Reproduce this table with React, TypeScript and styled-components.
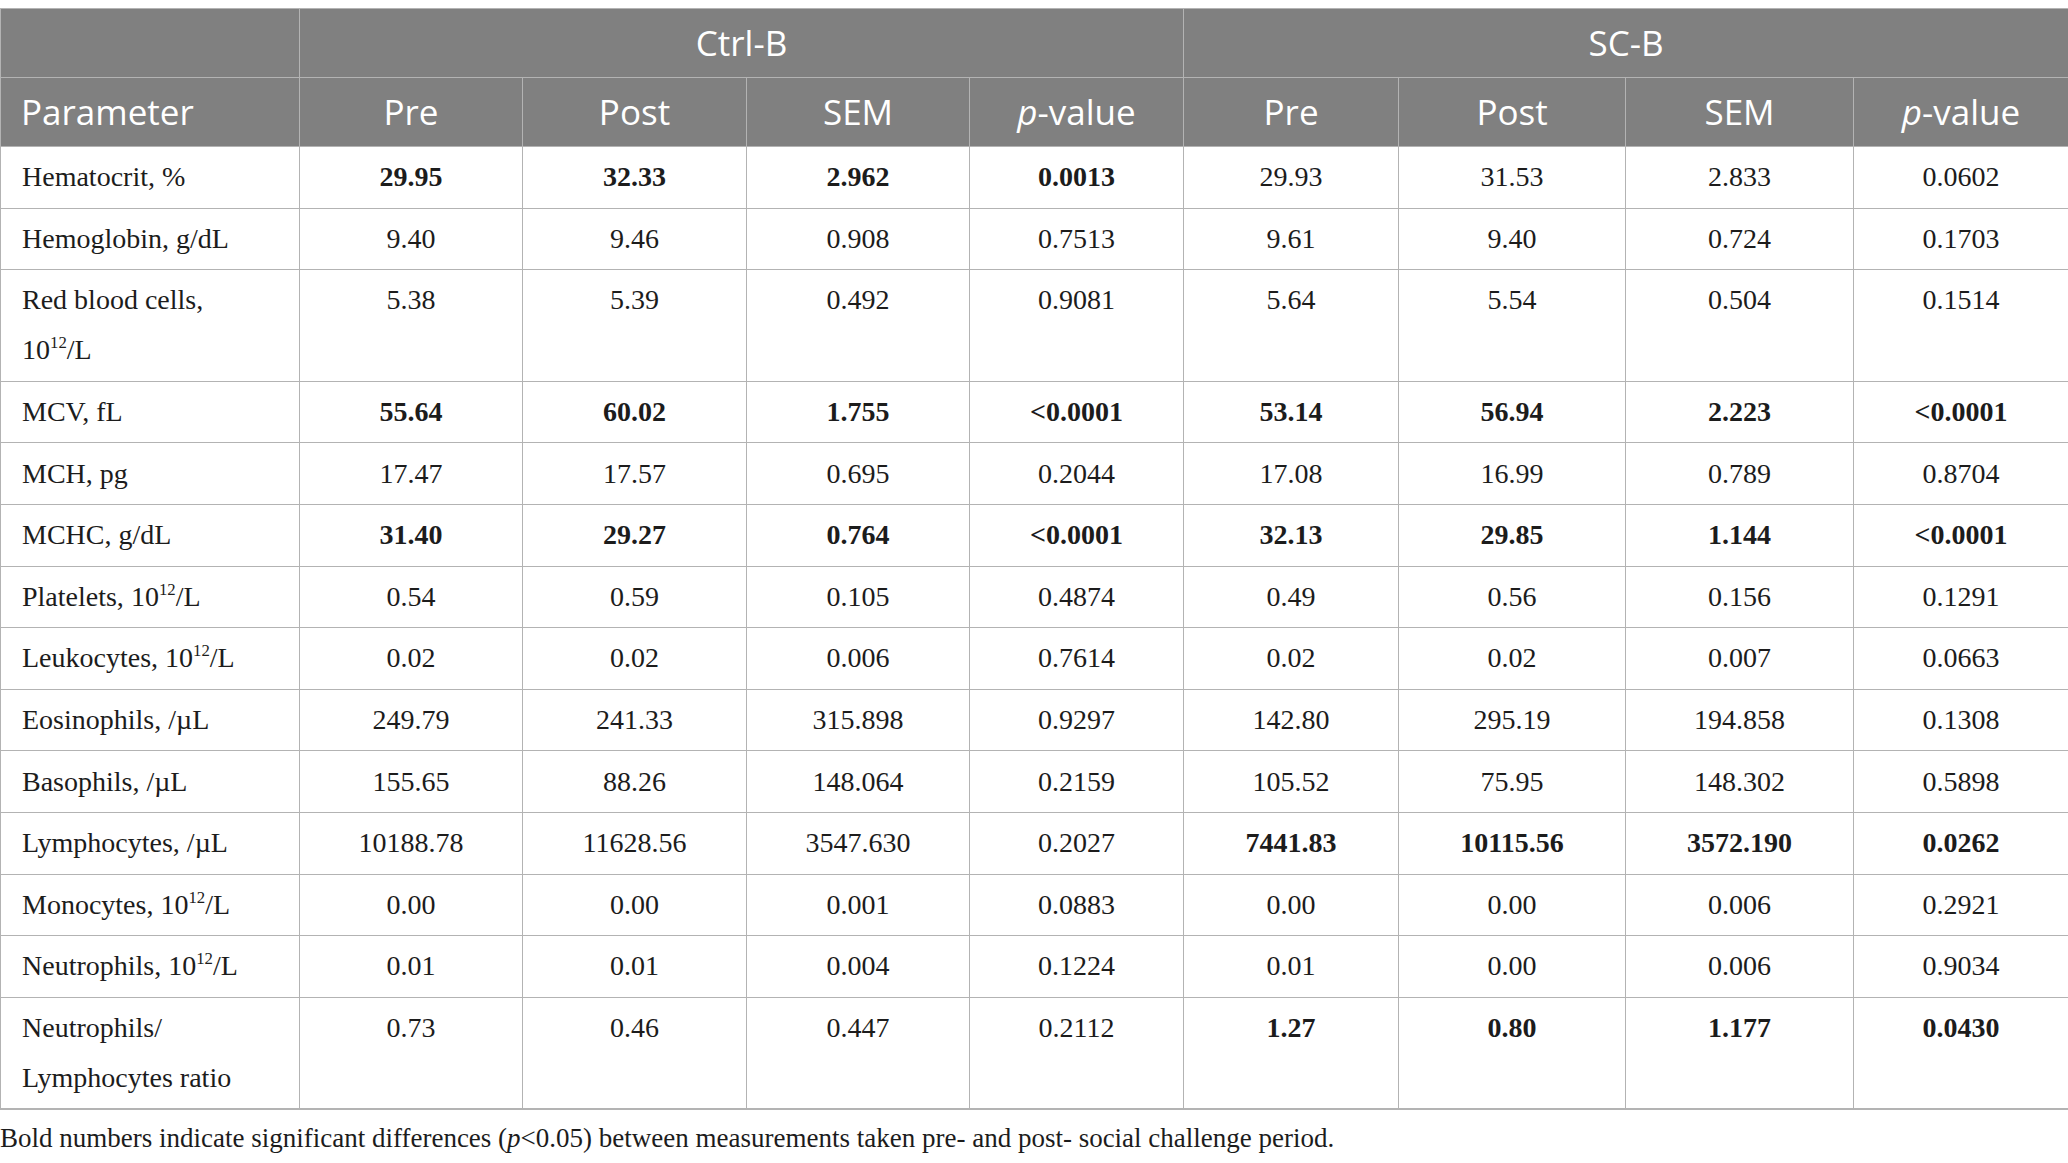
import React from "react";
import styled, { createGlobalStyle } from "styled-components";

const Global = createGlobalStyle`
  html, body { margin: 0; padding: 0; background: #ffffff; }
  body { font-family: "Liberation Serif", "Times New Roman", serif; }
`;

const Page = styled.div`
  padding-top: 8px;
  width: 2068px;
`;

const Table = styled.table`
  width: 2068px;
  table-layout: fixed;
  border-collapse: collapse;
  border-bottom: 2px solid #b3b3b3;
`;

const HeadCell = styled.th<{ $left?: boolean }>`
  background: #808080;
  color: #ffffff;
  font-family: "Open Sans", "Noto Sans", sans-serif;
  font-weight: 400;
  font-size: 35px;
  line-height: 48px;
  padding: 10px 20px;
  border: 1px solid #b3b3b3;
  text-align: ${(p) => (p.$left ? "left" : "center")};
  white-space: nowrap;
`;

const Cell = styled.td<{ $bold?: boolean; $label?: boolean }>`
  font-family: "Liberation Serif", "Times New Roman", serif;
  font-size: 28px;
  line-height: 50px;
  color: #1c1c1c;
  padding: 5.3px ${(p) => (p.$label ? "10px 5.3px 21px" : "10px 5.3px 10px")};
  border: 1px solid #b3b3b3;
  vertical-align: top;
  text-align: ${(p) => (p.$label ? "left" : "center")};
  font-weight: ${(p) => (p.$bold ? 700 : 400)};
  white-space: nowrap;
`;

const Sup = styled.sup`
  font-size: 0.6em;
  line-height: 0;
  vertical-align: 0.65em;
`;

const Note = styled.p`
  margin: 10px 0 0 0;
  font-family: "Liberation Serif", "Times New Roman", serif;
  font-size: 27px;
  line-height: 36px;
  color: #1c1c1c;
`;

const widths = [299, 223, 224, 223, 214, 215, 227, 228, 215];

const E12 = () => (
  <>
    10<Sup>12</Sup>/L
  </>
);

type Row = {
  label: React.ReactNode;
  vals: string[];
  bold: [boolean, boolean];
};

const rows: Row[] = [
  { label: "Hematocrit, %", vals: ["29.95", "32.33", "2.962", "0.0013", "29.93", "31.53", "2.833", "0.0602"], bold: [true, false] },
  { label: "Hemoglobin, g/dL", vals: ["9.40", "9.46", "0.908", "0.7513", "9.61", "9.40", "0.724", "0.1703"], bold: [false, false] },
  { label: <>Red blood cells,<br /><E12 /></>, vals: ["5.38", "5.39", "0.492", "0.9081", "5.64", "5.54", "0.504", "0.1514"], bold: [false, false] },
  { label: "MCV, fL", vals: ["55.64", "60.02", "1.755", "<0.0001", "53.14", "56.94", "2.223", "<0.0001"], bold: [true, true] },
  { label: "MCH, pg", vals: ["17.47", "17.57", "0.695", "0.2044", "17.08", "16.99", "0.789", "0.8704"], bold: [false, false] },
  { label: "MCHC, g/dL", vals: ["31.40", "29.27", "0.764", "<0.0001", "32.13", "29.85", "1.144", "<0.0001"], bold: [true, true] },
  { label: <>Platelets, <E12 /></>, vals: ["0.54", "0.59", "0.105", "0.4874", "0.49", "0.56", "0.156", "0.1291"], bold: [false, false] },
  { label: <>Leukocytes, <E12 /></>, vals: ["0.02", "0.02", "0.006", "0.7614", "0.02", "0.02", "0.007", "0.0663"], bold: [false, false] },
  { label: "Eosinophils, /µL", vals: ["249.79", "241.33", "315.898", "0.9297", "142.80", "295.19", "194.858", "0.1308"], bold: [false, false] },
  { label: "Basophils, /µL", vals: ["155.65", "88.26", "148.064", "0.2159", "105.52", "75.95", "148.302", "0.5898"], bold: [false, false] },
  { label: "Lymphocytes, /µL", vals: ["10188.78", "11628.56", "3547.630", "0.2027", "7441.83", "10115.56", "3572.190", "0.0262"], bold: [false, true] },
  { label: <>Monocytes, <E12 /></>, vals: ["0.00", "0.00", "0.001", "0.0883", "0.00", "0.00", "0.006", "0.2921"], bold: [false, false] },
  { label: <>Neutrophils, <E12 /></>, vals: ["0.01", "0.01", "0.004", "0.1224", "0.01", "0.00", "0.006", "0.9034"], bold: [false, false] },
  { label: <>Neutrophils/<br />Lymphocytes ratio</>, vals: ["0.73", "0.46", "0.447", "0.2112", "1.27", "0.80", "1.177", "0.0430"], bold: [false, true] },
];

const PValue = () => (
  <>
    <i>p</i>-value
  </>
);

export default function App() {
  return (
    <Page>
      <Global />
      <Table>
        <colgroup>
          {widths.map((w, i) => (
            <col key={i} style={{ width: w }} />
          ))}
        </colgroup>
        <thead>
          <tr>
            <HeadCell />
            <HeadCell colSpan={4}>Ctrl-B</HeadCell>
            <HeadCell colSpan={4}>SC-B</HeadCell>
          </tr>
          <tr>
            <HeadCell $left>Parameter</HeadCell>
            <HeadCell>Pre</HeadCell>
            <HeadCell>Post</HeadCell>
            <HeadCell>SEM</HeadCell>
            <HeadCell><PValue /></HeadCell>
            <HeadCell>Pre</HeadCell>
            <HeadCell>Post</HeadCell>
            <HeadCell>SEM</HeadCell>
            <HeadCell><PValue /></HeadCell>
          </tr>
        </thead>
        <tbody>
          {rows.map((r, i) => (
            <tr key={i}>
              <Cell $label>{r.label}</Cell>
              {r.vals.map((v, j) => (
                <Cell key={j} $bold={r.bold[j < 4 ? 0 : 1]}>
                  {v}
                </Cell>
              ))}
            </tr>
          ))}
        </tbody>
      </Table>
      <Note>
        Bold numbers indicate significant differences (<i>p</i>&lt;0.05) between measurements taken pre- and post- social challenge period.
      </Note>
    </Page>
  );
}
